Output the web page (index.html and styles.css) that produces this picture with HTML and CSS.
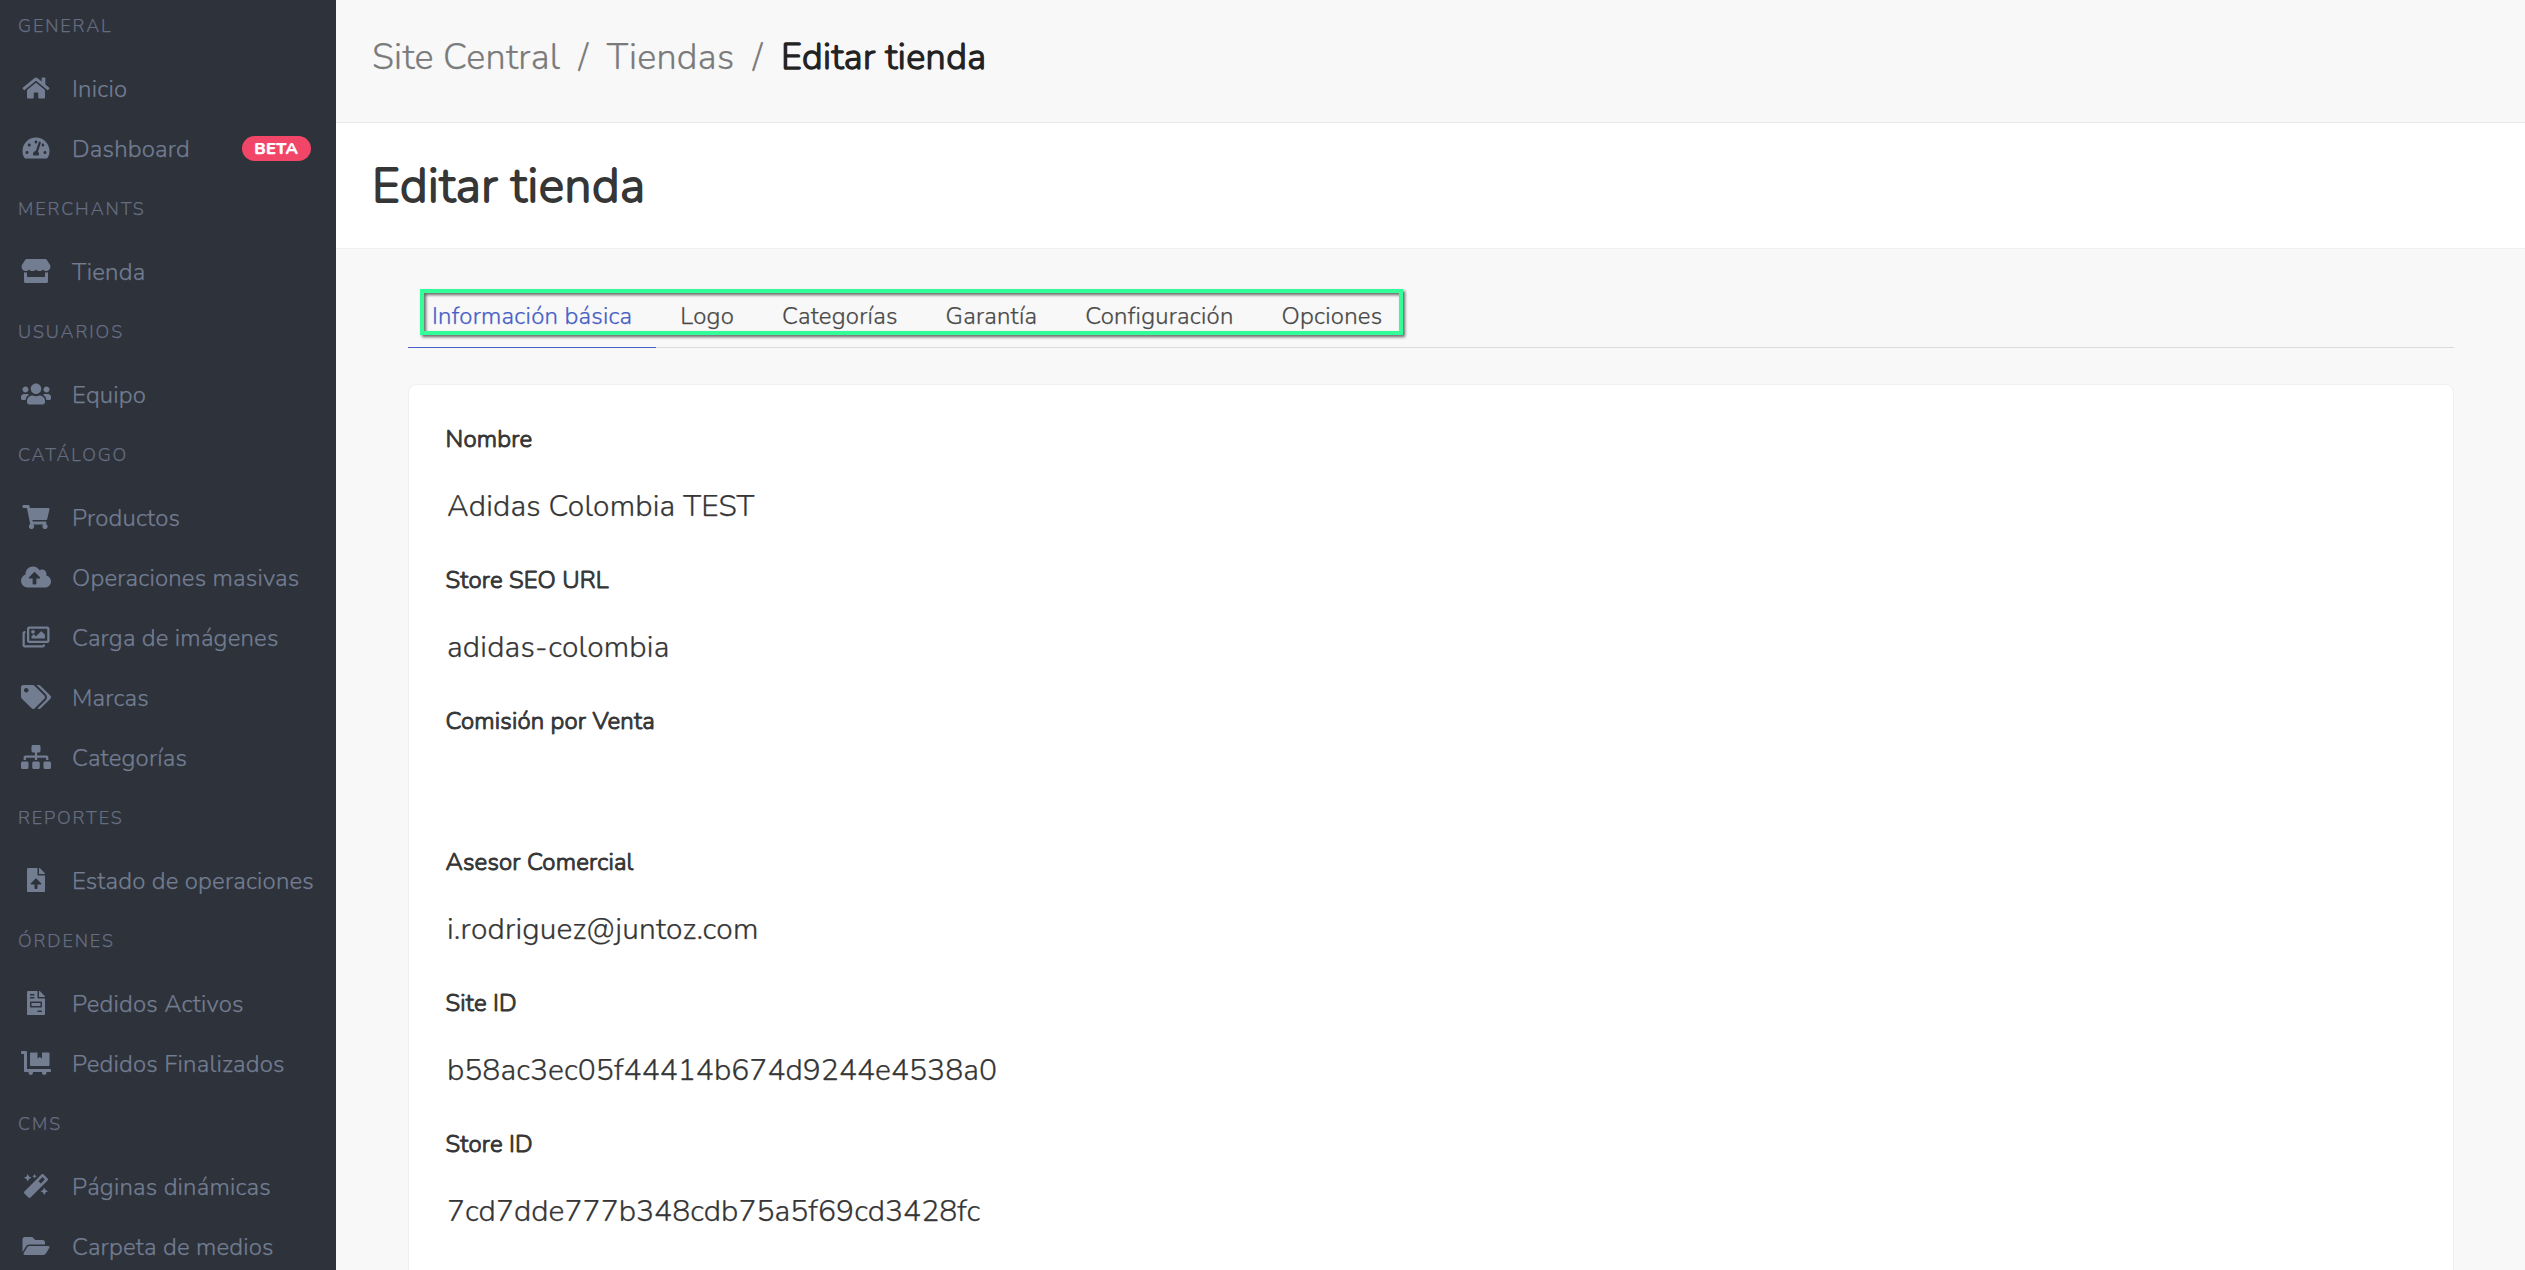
FILE: index.html
```html
<!DOCTYPE html>
<html lang="es">
<head>
<meta charset="utf-8">
<title>Editar tienda</title>
<link rel="stylesheet" href="styles.css">
</head>
<body>
<div class="app">
  <aside class="sidebar">
    <h2 class="menu-label">General</h2>
    <a class="menu-item"><svg class="icon" viewBox="0 0 576 512"><path d="M280.37 148.26L96 300.11V464a16 16 0 0 0 16 16l112.06-.29a16 16 0 0 0 15.92-16V368a16 16 0 0 1 16-16h64a16 16 0 0 1 16 16v95.64a16 16 0 0 0 16 16.05L464 480a16 16 0 0 0 16-16V300L295.67 148.26a12.19 12.19 0 0 0-15.3 0zM571.6 251.47L488 182.56V44.05a12 12 0 0 0-12-12h-56a12 12 0 0 0-12 12v72.61L318.47 43a48 48 0 0 0-61 0L4.34 251.47a12 12 0 0 0-1.6 16.9l25.5 31A12 12 0 0 0 45.15 301l235.22-193.74a12.19 12.19 0 0 1 15.3 0L530.9 301a12 12 0 0 0 16.9-1.6l25.5-31a12 12 0 0 0-1.7-16.93z"/></svg><span>Inicio</span></a>
    <a class="menu-item"><svg class="icon" viewBox="0 0 576 512"><path d="M288 32C128.94 32 0 160.94 0 320c0 52.8 14.25 102.26 39.06 144.8 5.61 9.62 16.3 15.2 27.44 15.2h443c11.14 0 21.83-5.58 27.44-15.2C561.75 422.26 576 372.8 576 320c0-159.06-128.94-288-288-288zm0 64c14.71 0 26.58 10.13 30.32 23.65-1.11 2.26-2.64 4.23-3.45 6.67l-9.22 27.67c-5.13 3.49-10.97 6.01-17.64 6.01-17.67 0-32-14.33-32-32S270.33 96 288 96zM96 384c-17.67 0-32-14.33-32-32s14.33-32 32-32 32 14.33 32 32-14.33 32-32 32zm48-160c-17.67 0-32-14.33-32-32s14.33-32 32-32 32 14.33 32 32-14.33 32-32 32zm246.77-72.41l-61.33 184C343.13 347.33 352 364.54 352 384c0 11.72-3.38 22.55-8.88 32H232.88c-5.5-9.45-8.88-20.28-8.88-32 0-33.94 26.5-61.43 59.9-63.59l61.34-184.01c4.17-12.56 17.73-19.45 30.36-15.17 12.57 4.19 19.35 17.79 15.17 30.36zm14.66 57.2l15.52-46.55c3.47-1.29 7.13-2.23 11.05-2.23 17.67 0 32 14.33 32 32s-14.33 32-32 32c-11.38-.01-20.89-6.28-26.57-15.22zM480 384c-17.67 0-32-14.33-32-32s14.33-32 32-32 32 14.33 32 32-14.33 32-32 32z"/></svg><span>Dashboard</span><span class="badge">BETA</span></a>

    <h2 class="menu-label">Merchants</h2>
    <a class="menu-item"><svg class="icon" viewBox="0 0 616 512"><path d="M602 118.6L537.1 15C531.3 5.7 521 0 510 0H106C95 0 84.7 5.7 78.9 15L14 118.6c-33.5 53.5-3.8 127.9 58.8 136.4 4.5.6 9.1.9 13.7.9 29.6 0 55.8-13 73.8-33.1 18 20.1 44.3 33.1 73.8 33.1 29.6 0 55.8-13 73.8-33.1 18 20.1 44.3 33.1 73.8 33.1 29.6 0 55.8-13 73.8-33.1 18.1 20.1 44.3 33.1 73.8 33.1 4.7 0 9.2-.3 13.7-.9 62.8-8.4 92.6-82.8 59-136.4zM529.5 288c-10 0-19.9-1.5-29.5-3.8V384H116v-99.8c-9.6 2.2-19.5 3.8-29.5 3.8-6 0-12.1-.4-18-1.2-5.6-.8-11.1-2.1-16.4-3.6V480c0 17.7 14.3 32 32 32h448c17.7 0 32-14.3 32-32V283.2c-5.4 1.6-10.8 2.9-16.4 3.6-6.1.8-12.1 1.2-18.2 1.2z"/></svg><span>Tienda</span></a>

    <h2 class="menu-label">Usuarios</h2>
    <a class="menu-item"><svg class="icon" viewBox="0 0 640 512"><path d="M96 224c35.3 0 64-28.7 64-64s-28.7-64-64-64-64 28.7-64 64 28.7 64 64 64zm448 0c35.3 0 64-28.7 64-64s-28.7-64-64-64-64 28.7-64 64 28.7 64 64 64zm32 32h-64c-17.6 0-33.5 7.1-45.1 18.6 40.3 22.1 68.9 62 75.1 109.4h66c17.7 0 32-14.3 32-32v-32c0-35.3-28.7-64-64-64zm-256 0c61.9 0 112-50.1 112-112S381.9 32 320 32 208 82.1 208 144s50.1 112 112 112zm76.8 32h-8.3c-20.8 10-43.9 16-68.5 16s-47.6-6-68.5-16h-8.3C179.6 288 128 339.6 128 403.2V432c0 26.5 21.5 48 48 48h288c26.5 0 48-21.5 48-48v-28.8c0-63.6-51.6-115.2-115.2-115.2zm-223.7-13.4C161.5 263.1 145.6 256 128 256H64c-35.3 0-64 28.7-64 64v32c0 17.7 14.3 32 32 32h65.9c6.3-47.4 34.9-87.3 75.2-109.4z"/></svg><span>Equipo</span></a>

    <h2 class="menu-label">Catálogo</h2>
    <a class="menu-item"><svg class="icon" viewBox="0 0 576 512"><path d="M528.12 301.319l47.273-208C578.806 78.301 567.391 64 551.99 64H159.208l-9.166-44.81C147.758 8.021 137.93 0 126.529 0H24C10.745 0 0 10.745 0 24v16c0 13.255 10.745 24 24 24h69.883l70.248 343.435C147.325 417.1 136 435.222 136 456c0 30.928 25.072 56 56 56s56-25.072 56-56c0-15.674-6.447-29.835-16.824-40h209.647C430.447 426.165 424 440.326 424 456c0 30.928 25.072 56 56 56s56-25.072 56-56c0-22.172-12.888-41.332-31.579-50.405l5.517-24.276c3.413-15.018-8.002-29.319-23.403-29.319H218.117l-6.545-32h293.145c11.206 0 20.92-7.754 23.403-18.681z"/></svg><span>Productos</span></a>
    <a class="menu-item"><svg class="icon" viewBox="0 0 640 512"><path d="M537.6 226.6c4.1-10.7 6.4-22.4 6.4-34.6 0-53-43-96-96-96-19.7 0-38.1 6-53.3 16.2C367 64.2 315.3 32 256 32c-88.4 0-160 71.6-160 160 0 2.7.1 5.4.2 8.1C40.2 219.8 0 273.2 0 336c0 79.5 64.5 144 144 144h368c70.7 0 128-57.3 128-128 0-61.9-44-113.6-102.4-125.4zM393.4 288H328v112c0 8.8-7.2 16-16 16h-48c-8.8 0-16-7.2-16-16V288h-65.4c-14.3 0-21.4-17.2-11.3-27.3l105.4-105.4c6.2-6.2 16.4-6.2 22.6 0l105.4 105.4c10.1 10.1 2.9 27.3-11.3 27.3z"/></svg><span>Operaciones masivas</span></a>
    <a class="menu-item"><svg class="icon" viewBox="0 0 576 512"><path d="M480 416v16c0 26.51-21.49 48-48 48H48c-26.51 0-48-21.49-48-48V176c0-26.51 21.49-48 48-48h16v48H54a6 6 0 0 0-6 6v244a6 6 0 0 0 6 6h372a6 6 0 0 0 6-6v-10h48zm42-336H150a6 6 0 0 0-6 6v244a6 6 0 0 0 6 6h372a6 6 0 0 0 6-6V86a6 6 0 0 0-6-6zm6-48c26.51 0 48 21.49 48 48v256c0 26.51-21.49 48-48 48H144c-26.51 0-48-21.49-48-48V80c0-26.51 21.49-48 48-48h384zM264 144c0 22.091-17.909 40-40 40s-40-17.909-40-40 17.909-40 40-40 40 17.909 40 40zm-72 96l39.515-39.515c4.686-4.686 12.284-4.686 16.971 0L288 240l103.515-103.515c4.686-4.686 12.284-4.686 16.971 0L480 208v80H192v-48z"/></svg><span>Carga de imágenes</span></a>
    <a class="menu-item"><svg class="icon" viewBox="0 0 640 512"><path d="M497.941 225.941L286.059 14.059A48 48 0 0 0 252.118 0H48C21.49 0 0 21.49 0 48v204.118a48 48 0 0 0 14.059 33.941l211.882 211.882c18.744 18.745 49.136 18.746 67.882 0l204.118-204.118c18.745-18.745 18.745-49.137 0-67.882zM112 160c-26.51 0-48-21.49-48-48s21.49-48 48-48 48 21.49 48 48-21.49 48-48 48zm513.941 133.823L421.823 497.941c-18.745 18.745-49.137 18.745-67.882 0l-.36-.36L527.64 323.522c16.999-16.999 26.36-39.6 26.36-63.64s-9.362-46.641-26.36-63.64L331.397 0h48.721a48 48 0 0 1 33.941 14.059l211.882 211.882c18.745 18.745 18.745 49.137 0 67.882z"/></svg><span>Marcas</span></a>
    <a class="menu-item"><svg class="icon" viewBox="0 0 640 512"><path d="M128 352H32c-17.67 0-32 14.33-32 32v96c0 17.67 14.33 32 32 32h96c17.67 0 32-14.33 32-32v-96c0-17.67-14.33-32-32-32zm-24-80h192v48h48v-48h192v48h48v-57.59c0-21.17-17.23-38.41-38.41-38.41H344v-64h40c17.67 0 32-14.33 32-32V32c0-17.67-14.33-32-32-32H256c-17.67 0-32 14.33-32 32v96c0 17.67 14.33 32 32 32h40v64H94.41C73.23 224 56 241.23 56 262.41V320h48v-48zm264 80h-96c-17.67 0-32 14.33-32 32v96c0 17.67 14.33 32 32 32h96c17.67 0 32-14.33 32-32v-96c0-17.67-14.33-32-32-32zm240 0h-96c-17.67 0-32 14.33-32 32v96c0 17.67 14.33 32 32 32h96c17.67 0 32-14.33 32-32v-96c0-17.67-14.33-32-32-32z"/></svg><span>Categorías</span></a>

    <h2 class="menu-label">Reportes</h2>
    <a class="menu-item"><svg class="icon" viewBox="0 0 384 512"><path d="M224 136V0H24C10.7 0 0 10.7 0 24v464c0 13.3 10.7 24 24 24h336c13.3 0 24-10.7 24-24V160H248c-13.2 0-24-10.8-24-24zm65.18 216.01H224v80c0 8.84-7.16 16-16 16h-32c-8.84 0-16-7.16-16-16v-80H94.82c-14.28 0-21.41-17.29-11.27-27.36l96.42-95.7c6.65-6.61 17.39-6.61 24.04 0l96.42 95.7c10.15 10.07 3.03 27.36-11.25 27.36zM377 105L279.1 7c-4.5-4.5-10.6-7-17-7H256v128h128v-6.1c0-6.3-2.5-12.4-7-16.9z"/></svg><span>Estado de operaciones</span></a>

    <h2 class="menu-label">Órdenes</h2>
    <a class="menu-item"><svg class="icon" viewBox="0 0 384 512"><path d="M288 256H96v64h192v-64zm89-151L279.1 7c-4.5-4.5-10.6-7-17-7H256v128h128v-6.1c0-6.3-2.5-12.4-7-16.9zm-153 31V0H24C10.7 0 0 10.7 0 24v464c0 13.3 10.7 24 24 24h336c13.3 0 24-10.7 24-24V160H248c-13.2 0-24-10.8-24-24zM64 72c0-4.42 3.58-8 8-8h80c4.42 0 8 3.58 8 8v16c0 4.42-3.58 8-8 8H72c-4.42 0-8-3.58-8-8V72zm0 64c0-4.42 3.58-8 8-8h80c4.42 0 8 3.58 8 8v16c0 4.42-3.58 8-8 8H72c-4.42 0-8-3.58-8-8v-16zm256 304c0 4.42-3.58 8-8 8h-80c-4.42 0-8-3.58-8-8v-16c0-4.42 3.58-8 8-8h80c4.42 0 8 3.58 8 8v16zm0-200v96c0 8.84-7.16 16-16 16H80c-8.84 0-16-7.16-16-16v-96c0-8.84 7.16-16 16-16h224c8.84 0 16 7.16 16 16z"/></svg><span>Pedidos Activos</span></a>
    <a class="menu-item"><svg class="icon" viewBox="0 0 640 512"><path d="M208 320h384c8.8 0 16-7.2 16-16V48c0-8.8-7.2-16-16-16H448v128l-48-32-48 32V32H208c-8.8 0-16 7.2-16 16v256c0 8.8 7.2 16 16 16zm416 64H128V16c0-8.8-7.2-16-16-16H16C7.2 0 0 7.2 0 16v32c0 8.8 7.2 16 16 16h48v368c0 8.8 7.2 16 16 16h82.9c-1.8 5-2.9 10.4-2.9 16 0 26.5 21.5 48 48 48s48-21.5 48-48c0-5.6-1.2-11-2.9-16H451c-1.8 5-2.9 10.4-2.9 16 0 26.5 21.5 48 48 48s48-21.5 48-48c0-5.6-1.2-11-2.9-16H624c8.8 0 16-7.2 16-16v-32c0-8.8-7.2-16-16-16z"/></svg><span>Pedidos Finalizados</span></a>

    <h2 class="menu-label">CMS</h2>
    <a class="menu-item"><svg class="icon" viewBox="0 0 512 512"><path d="M224 96l16-32 32-16-32-16-16-32-16 32-32 16 32 16 16 32zM80 160l26.66-53.33L160 80l-53.34-26.67L80 0 53.34 53.33 0 80l53.34 26.67L80 160zm352 128l-26.66 53.33L352 368l53.34 26.67L432 448l26.66-53.33L512 368l-53.34-26.67L432 288zm70.62-193.77L417.77 9.38C411.53 3.12 403.34 0 395.15 0c-8.19 0-16.38 3.12-22.63 9.38L9.38 372.52c-12.5 12.5-12.5 32.76 0 45.25l84.85 84.85c6.25 6.25 14.44 9.37 22.62 9.37 8.19 0 16.38-3.12 22.63-9.37l363.14-363.15c12.5-12.48 12.5-32.75 0-45.24zM359.45 203.46l-50.91-50.91 86.6-86.6 50.91 50.91-86.6 86.6z"/></svg><span>Páginas dinámicas</span></a>
    <a class="menu-item"><svg class="icon" viewBox="0 0 576 512"><path d="M572.694 292.093L500.27 416.248A63.997 63.997 0 0 1 444.989 448H45.025c-18.523 0-30.064-20.093-20.731-36.093l72.424-124.155A64 64 0 0 1 152 256h399.964c18.523 0 30.064 20.093 20.73 36.093zM152 224h328v-48c0-26.51-21.49-48-48-48H272l-64-64H48C21.49 64 0 85.49 0 112v278.046l69.077-118.418C86.214 242.25 117.989 224 152 224z"/></svg><span>Carpeta de medios</span></a>
  </aside>

  <main class="main">
    <nav class="breadcrumb">
      <a>Site Central</a><span>/</span><a>Tiendas</a><span>/</span><a class="current">Editar tienda</a>
    </nav>
    <header class="hero"><h1 class="title">Editar tienda</h1></header>
    <div class="content">
      <nav class="tabs">
        <a class="tab active">Información básica</a>
        <a class="tab">Logo</a>
        <a class="tab">Categorías</a>
        <a class="tab">Garantía</a>
        <a class="tab">Configuración</a>
        <a class="tab">Opciones</a>
        <div class="highlight"></div>
      </nav>
      <dl class="card">
        <dt>Nombre</dt><dd>Adidas Colombia TEST</dd>
        <dt>Store SEO URL</dt><dd>adidas-colombia</dd>
        <dt>Comisión por Venta</dt><dd></dd>
        <dt>Asesor Comercial</dt><dd>i.rodriguez@juntoz.com</dd>
        <dt>Site ID</dt><dd class="id">b58ac3ec05f44414b674d9244e4538a0</dd>
        <dt>Store ID</dt><dd class="id">7cd7dde777b348cdb75a5f69cd3428fc</dd>
      </dl>
    </div>
  </main>
</div>
</body>
</html>
```
FILE: styles.css
```css
* { box-sizing: border-box; }

body {
  margin: 0;
  font-family: Nunito, Lato, sans-serif;
  font-size: 24px;
  font-weight: 300;
  color: #363636;
  background: #f8f8f8;
  -webkit-text-stroke: 0.25px;
}

.app {
  display: flex;
  height: 1270px;
  overflow: hidden;
}

/* Sidebar */
.sidebar {
  flex: none;
  width: 336px;
  height: 1274px;
  margin-top: -4px;
  background: #2e323a;
}

.menu-label {
  height: 63px;
  margin: 0;
  padding-left: 18px;
  font-size: 18px;
  font-weight: 300;
  line-height: 60px;
  letter-spacing: 1.9px;
  text-transform: uppercase;
  color: #666d80;
}

.menu-item {
  display: flex;
  align-items: center;
  height: 60px;
  padding: 0 25px 0 21px;
  line-height: 36px;
  letter-spacing: 0.18px;
  white-space: nowrap;
  color: #727d92;
}

.icon {
  flex: none;
  width: 30px;
  height: 24px;
  margin: 0 21px 2px 0;
  fill: #727d92;
}

.badge {
  height: 25px;
  margin: 0 0 1px auto;
  padding: 0 13px 0 12px;
  border-radius: 13px;
  font-size: 16.5px;
  font-weight: 800;
  line-height: 25px;
  color: #fff;
  background: #f14668;
}

/* Page header */
.main {
  flex: 1;
  min-width: 0;
}

.breadcrumb {
  display: flex;
  gap: 18.3px;
  height: 123px;
  padding: 28px 36px 0 36px;
  border-bottom: 1px solid #ebebeb;
  font-size: 36px;
  line-height: 60px;
  letter-spacing: 0.27px;
  color: #7a7a7a;
}

.current {
  letter-spacing: 0.4px;
  color: #222;
  -webkit-text-stroke: 1.3px;
}

.hero {
  height: 126px;
  padding: 27px 36px;
  border-bottom: 1px solid #f0f0f0;
  background: #fff;
}

.title {
  margin: 0;
  font-size: 48px;
  font-weight: 300;
  line-height: 72px;
  letter-spacing: 0.5px;
  -webkit-text-stroke: 1.8px;
}

/* Tabs */
.content { padding: 36px 71px 0 72px; }

.tabs {
  position: relative;
  display: flex;
  height: 63px;
  border-bottom: 1px solid #dbdbdb;
}

.tab {
  height: 63px;
  padding: 0 24px;
  line-height: 62px;
  letter-spacing: 0.22px;
  color: #4a4a4a;
}

.active {
  color: #485fc7;
  border-bottom: 1px solid #485fc7;
}

.highlight {
  position: absolute;
  left: 12px;
  top: 4px;
  width: 983px;
  height: 46px;
  border: 4px solid #33ff99;
  filter: drop-shadow(2px 2px 1.5px rgba(0, 0, 0, .6));
}

/* Details */
.card {
  height: 940px;
  margin: 36px 0 0;
  padding: 36px 36.6px;
  border: 1px solid #f0f0f0;
  border-radius: 9px;
  background: #fff;
}

dt {
  height: 36px;
  line-height: 36px;
  letter-spacing: 0.17px;
  -webkit-text-stroke: 1px;
}

dd {
  height: 105px;
  margin: 0;
  padding: 27px 0 0 1.4px;
  font-size: 30px;
  line-height: 45px;
  letter-spacing: 0.2px;
}

.id { letter-spacing: 0.07px; }
```
